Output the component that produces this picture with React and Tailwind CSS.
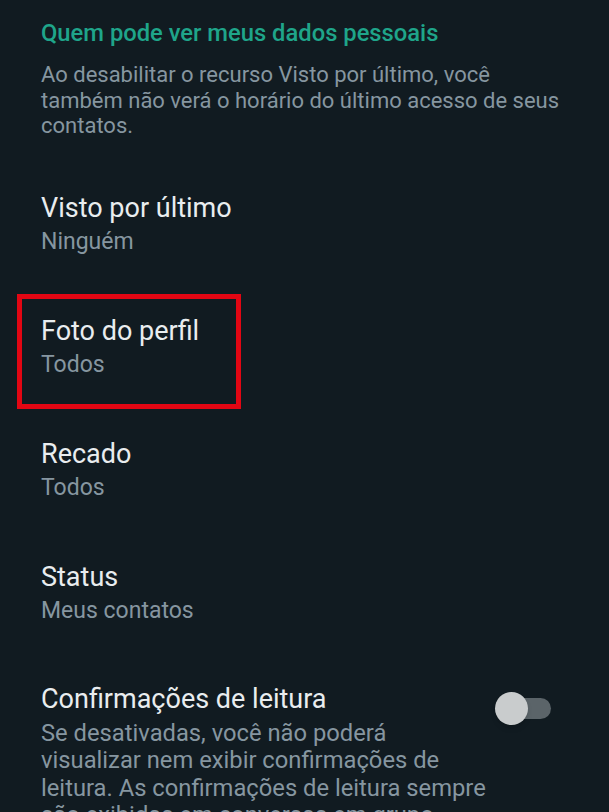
import React, { useState } from 'react';

const itens = [
  { titulo: 'Visto por último', valor: 'Ninguém' },
  { titulo: 'Foto do perfil', valor: 'Todos', destaque: true },
  { titulo: 'Recado', valor: 'Todos' },
  { titulo: 'Status', valor: 'Meus contatos' },
];

function Item({ titulo, valor, destaque }) {
  return (
    <div className="relative h-[123px] pl-[41px] pt-[20px]">
      {destaque && (
        <div className="absolute left-[17px] top-[-1px] w-[224px] h-[115px] border-[5px] border-[#e30613]" />
      )}
      <p className="text-[27px] leading-[33px] text-[#e9edef]">{titulo}</p>
      <p className="text-[23px] leading-[34px] text-[#8696a0]">{valor}</p>
    </div>
  );
}

export default function App() {
  const [leitura, setLeitura] = useState(false);

  return (
    <div className="h-[812px] overflow-hidden bg-[#111b21] font-['Roboto',sans-serif]">
      <div className="pl-[41px] pr-[10px] pt-[19px]">
        <h2 className="text-[23.75px] leading-[28px] font-medium text-[#1fa58a]">
          Quem pode ver meus dados pessoais
        </h2>
        <p className="mt-[15px] text-[22px] leading-[25.5px] text-[#8696a0]">
          Ao desabilitar o recurso Visto por último, você
          <br />
          também não verá o horário do último acesso de seus contatos.
        </p>
      </div>

      <div className="mt-[33px]">
        {itens.map(it => (
          <Item key={it.titulo} {...it} />
        ))}
      </div>

      <div className="flex pl-[41px] pr-[58px] pt-[19px]">
        <div className="w-[450px]">
          <p className="text-[27px] leading-[33px] text-[#e9edef]">Confirmações de leitura</p>
          <p className="mt-[4px] text-[23.75px] leading-[27.5px] text-[#8696a0]">
            Se desativadas, você não poderá visualizar nem exibir confirmações de leitura. As confirmações de leitura sempre são exibidas em conversas em grupo.
          </p>
        </div>
        <button
          onClick={() => setLeitura(v => !v)}
          className="relative ml-auto mt-[9px] w-[56px] h-[34px] shrink-0"
        >
          <span className="absolute left-[10px] right-0 top-[6px] h-[21px] rounded-full bg-[#5b6469]" />
          <span className={`absolute top-0 w-[33px] h-[33px] rounded-full bg-[#c9cccd] shadow-md ${leitura ? 'left-[23px]' : 'left-0'}`} />
        </button>
      </div>
    </div>
  );
}
